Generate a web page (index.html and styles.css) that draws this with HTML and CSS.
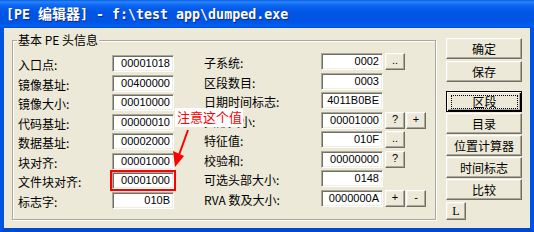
FILE: index.html
```html
<!DOCTYPE html>
<html>
<head>
<meta charset="utf-8">
<link rel="stylesheet" href="styles.css">
</head>
<body>
<div class="window">
  <div class="titlebar"><span class="title">[PE <span class="cjk">编辑器</span>] - f:\test app\dumped.exe</span></div>
  <div class="frame">
    <fieldset class="group">
      <legend>基本 PE 头信息</legend>
      <div class="fields">
        <div class="col col-left">
          <div class="row"><span class="lbl">入口点:</span><span class="edit">00001018</span></div>
          <div class="row"><span class="lbl">镜像基址:</span><span class="edit">00400000</span></div>
          <div class="row"><span class="lbl">镜像大小:</span><span class="edit">00010000</span></div>
          <div class="row"><span class="lbl">代码基址:</span><span class="edit">00000010</span></div>
          <div class="row"><span class="lbl">数据基址:</span><span class="edit">00002000</span></div>
          <div class="row"><span class="lbl">块对齐:</span><span class="edit">00001000</span></div>
          <div class="row"><span class="lbl">文件块对齐:</span><span class="edit marked">00001000</span></div>
          <div class="row"><span class="lbl">标志字:</span><span class="edit">010B</span></div>
        </div>
        <div class="col col-right">
          <div class="row"><span class="lbl">子系统:</span><span class="edit">0002</span><span class="sbtn">..</span></div>
          <div class="row"><span class="lbl">区段数目:</span><span class="edit">0003</span></div>
          <div class="row"><span class="lbl">日期时间标志:</span><span class="edit">4011B0BE</span></div>
          <div class="row"><span class="lbl">头部大小:</span><span class="edit">00001000</span><span class="sbtn">?</span><span class="sbtn">+</span></div>
          <div class="row"><span class="lbl">特征值:</span><span class="edit">010F</span><span class="sbtn">..</span></div>
          <div class="row"><span class="lbl">校验和:</span><span class="edit">00000000</span><span class="sbtn">?</span></div>
          <div class="row"><span class="lbl">可选头部大小:</span><span class="edit">0148</span></div>
          <div class="row"><span class="lbl">RVA 数及大小:</span><span class="edit">0000000A</span><span class="sbtn">+</span><span class="sbtn">-</span></div>
        </div>
      </div>
    </fieldset>
    <div class="buttons">
      <div class="btn">确定</div>
      <div class="btn sep-sm">保存</div>
      <div class="btn default sep-lg"><span class="focus">区段</span></div>
      <div class="btn">目录</div>
      <div class="btn">位置计算器</div>
      <div class="btn">时间标志</div>
      <div class="btn">比较</div>
      <div class="btn mini sep-sm">L</div>
    </div>
  </div>
  <div class="note">注意这个值</div>
  <svg class="arrow" width="534" height="232" viewBox="0 0 534 232">
    <line x1="188" y1="130" x2="179" y2="155" stroke="#ff0000" stroke-width="2"/>
    <polygon points="173,151 184,156 175,167" fill="#ff0000"/>
  </svg>
</div>
</body>
</html>
```
FILE: styles.css
```css
html, body {
  margin: 0;
  padding: 0;
}
body {
  width: 534px;
  height: 232px;
  overflow: hidden;
  background: #ECE9D8;
  font-family: "Noto Sans CJK SC", "Noto Sans", sans-serif;
  font-size: 12px;
  color: #000;
}
.window {
  position: relative;
  width: 534px;
  height: 232px;
  display: flex;
  flex-direction: column;
}
.titlebar {
  height: 28px;
  flex: none;
  background: linear-gradient(#0A5CE0 0px, #2A86FA 2px, #1470F5 4px, #0860EE 7px, #0055E5 12px, #0054E3 20px, #0058EA 24px, #0062F2 26px, #004BD6 28px);
  padding-left: 6px;
  box-sizing: border-box;
  display: flex;
  align-items: flex-end;
  padding-bottom: 5px;
}
.title {
  color: #fff;
  font-family: "DejaVu Sans Mono", "Liberation Mono", monospace;
  font-weight: bold;
  font-size: 13.3px;
  line-height: 16px;
  white-space: pre;
  text-shadow: 1px 1px 0 #0A2A8A;
}
.title .cjk {
  font-family: "Noto Sans CJK SC", sans-serif;
  font-size: 14px;
  font-weight: bold;
}
.frame {
  flex: 1;
  display: flex;
  background: #ECE9D8;
  border: 4px solid #0054E3;
  border-top: 0;
  border-bottom-color: #0047D4;
  padding: 5px 8px 8px 8px;
  gap: 10px;
}
.group {
  flex: 1;
  min-width: 0;
  margin: 0;
  padding: 0;
  border: 1px solid #ACA899;
  box-shadow: inset 1px 1px 0 #fff, 1px 1px 0 #fff;
}
.group legend {
  margin-left: 4px;
  padding: 0 1px;
  line-height: 14px;
  background: #ECE9D8;
}
.fields {
  display: flex;
  padding-left: 5px;
}
.col {
  display: grid;
  grid-auto-rows: 19.5px;
}
.col-left {
  padding-top: 8px;
}
.col-right {
  padding-top: 6px;
  margin-left: 30px;
}
.row {
  display: flex;
  align-items: flex-start;
}
.lbl {
  line-height: 17px;
  padding-top: 1px;
  white-space: nowrap;
}
.col-left .lbl {
  width: 94px;
}
.col-right .lbl {
  width: 117px;
}
.edit {
  width: 62px;
  height: 17px;
  box-sizing: border-box;
  background: #fff;
  border: 1px solid;
  border-color: #ACA899 #fff #fff #ACA899;
  box-shadow: inset 1px 1px 0 #716F64, inset -1px -1px 0 #F1EFE2;
  font-family: "Liberation Sans", Arial, sans-serif;
  font-size: 11px;
  line-height: 15px;
  text-align: right;
  padding-right: 3px;
}
.edit.marked {
  outline: 2px solid #ff0000;
}
.sbtn {
  width: 20px;
  height: 17px;
  box-sizing: border-box;
  margin-left: 1px;
  background: #ECE9D8;
  border: 1px solid;
  border-color: #fff #716F64 #716F64 #fff;
  box-shadow: inset -1px -1px 0 #ACA899, inset 1px 1px 0 #F1EFE2;
  font-family: "Liberation Sans", Arial, sans-serif;
  font-size: 11px;
  line-height: 13px;
  text-align: center;
}
.edit + .sbtn {
  margin-left: 2px;
}
.buttons {
  width: 76px;
  flex: none;
  margin-top: 5px;
  display: flex;
  flex-direction: column;
  gap: 1px;
}
.btn {
  height: 21px;
  box-sizing: border-box;
  background: #ECE9D8;
  border: 1px solid;
  border-color: #fff #716F64 #716F64 #fff;
  box-shadow: inset -1px -1px 0 #ACA899, inset 1px 1px 0 #F1EFE2;
  text-align: center;
  line-height: 19px;
}
.btn.sep-sm {
  margin-top: 1px;
}
.btn.sep-lg {
  margin-top: 8px;
}
.btn.default {
  border-color: #000;
  box-shadow: inset 1px 1px 0 #fff, inset -1px -1px 0 #000, inset -2px -2px 0 #ACA899;
  padding: 3px 3px 3px 4px;
}
.btn.default .focus {
  display: block;
  height: 12px;
  line-height: 12px;
  border: 1px dotted #000;
}
.btn.mini {
  width: 20px;
  height: 18px;
  line-height: 16px;
  font-family: "Liberation Serif", serif;
}
.note {
  position: absolute;
  left: 175px;
  top: 108px;
  width: 68px;
  height: 19px;
  box-sizing: border-box;
  padding-left: 2px;
  background: #fff;
  color: #ff0000;
  font-size: 13px;
  line-height: 18px;
  white-space: nowrap;
}
.arrow {
  position: absolute;
  left: 0;
  top: 0;
  pointer-events: none;
}
```
